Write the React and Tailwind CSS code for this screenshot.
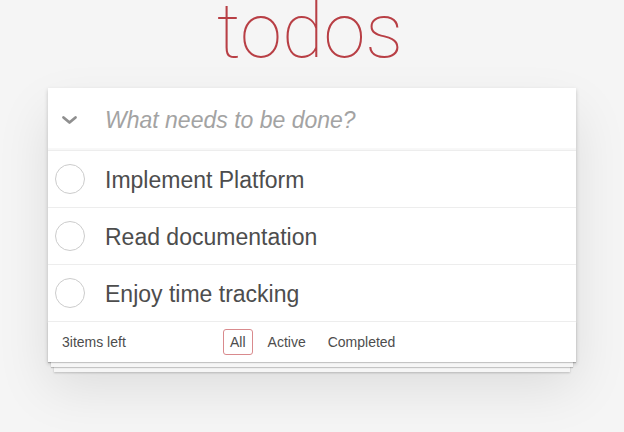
import React from "react";

const TODOS = [
  { id: 1, title: "Implement Platform" },
  { id: 2, title: "Read documentation" },
  { id: 3, title: "Enjoy time tracking" },
];

const FILTERS = ["All", "Active", "Completed"];

const FONT = { fontFamily: '"Liberation Sans", Arial, sans-serif' };

export default function App() {
  return (
    <div
      className="min-h-screen bg-[#f5f5f5] text-[#4d4d4d] antialiased"
      style={FONT}
    >
      <div className="mx-auto w-[528px]">
        {/* Title */}
        <h1
          className="h-[88px] text-center text-[76px] leading-[62px] font-thin text-[#b83f45] pr-[4px]"
          style={{ fontFamily: 'Roboto, "Liberation Sans", sans-serif' }}
        >
          todos
        </h1>

        <section className="relative bg-white shadow-[0_2px_4px_0_rgba(0,0,0,0.2),0_25px_50px_0_rgba(0,0,0,0.1)]">
          {/* New todo input */}
          <div className="flex h-[63px] items-center shadow-[inset_0_-2px_1px_rgba(0,0,0,0.03)] border-b border-[#ededed]">
            <div className="flex w-[57px] shrink-0 pl-[13px] pt-[2px]">
              <svg width="17" height="10" viewBox="0 0 17 10">
                <path d="M2.5 2.5 L8.5 7.5 L14.5 2.5" fill="none" stroke="#8f8f8f" strokeWidth="2.8" strokeLinecap="round" strokeLinejoin="round" />
              </svg>
            </div>
            <span className="pt-[3px] text-[23px] italic text-[#a3a3a3]">
              What needs to be done?
            </span>
          </div>

          {/* Todo list */}
          <ul>
            {TODOS.map((todo) => (
              <li
                key={todo.id}
                className="flex h-[57px] items-center border-b border-[#ededed]"
              >
                <div className="flex w-[57px] shrink-0 pl-[7px]">
                  <span className="h-[30px] w-[30px] rounded-full border border-[#cccccc]" />
                </div>
                <span className="pt-[3px] text-[23px] text-[#4d4d4d]">{todo.title}</span>
              </li>
            ))}
          </ul>

          {/* Footer */}
          <footer className="relative flex h-[40px] items-center px-[14px] text-[14px] text-[#4d4d4d] shadow-[0_1px_1px_rgba(0,0,0,0.2),0_8px_0_-3px_#f6f6f6,0_9px_1px_-3px_rgba(0,0,0,0.2),0_16px_0_-6px_#f6f6f6,0_17px_2px_-6px_rgba(0,0,0,0.2)]">
            <span className="w-[161px]">3items left</span>
            <ul className="flex items-center gap-[8px]">
              {FILTERS.map((f) => (
                <li key={f}>
                  <span
                    className={
                      "inline-block rounded-[3px] border px-[6px] py-[3px] leading-[18px] " +
                      (f === "All" ? "border-[#d98a8d]" : "border-transparent")
                    }
                  >
                    {f}
                  </span>
                </li>
              ))}
            </ul>
          </footer>
        </section>
      </div>
    </div>
  );
}
